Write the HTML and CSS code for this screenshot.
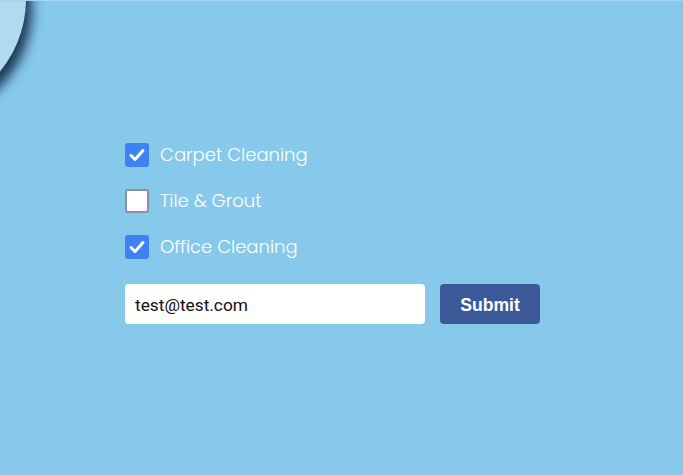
FILE: index.html
```html
<!DOCTYPE html>
<html>
<head>
<meta charset="utf-8">
<link rel="stylesheet" href="styles.css">
</head>
<body>
<div class="page">
  <div class="blob"></div>
  <form class="form">
    <label class="option">
      <span class="box checked"><svg viewBox="0 0 24 24" width="24" height="24"><path d="M6 12.5l4 4 8-9" fill="none" stroke="#fff" stroke-width="3" stroke-linecap="round" stroke-linejoin="round"/></svg></span>
      <span class="label">Carpet Cleaning</span>
    </label>
    <label class="option">
      <span class="box"></span>
      <span class="label">Tile &amp; Grout</span>
    </label>
    <label class="option">
      <span class="box checked"><svg viewBox="0 0 24 24" width="24" height="24"><path d="M6 12.5l4 4 8-9" fill="none" stroke="#fff" stroke-width="3" stroke-linecap="round" stroke-linejoin="round"/></svg></span>
      <span class="label">Office Cleaning</span>
    </label>
    <div class="row">
      <input class="email" type="text" value="test@test.com">
      <button class="submit" type="button">Submit</button>
    </div>
  </form>
</div>
</body>
</html>
```

FILE: styles.css
```css
html, body {
  margin: 0;
  padding: 0;
}
body {
  background: #87c9ea;
  width: 683px;
  height: 475px;
  overflow: hidden;
}
.page {
  position: relative;
  width: 683px;
  height: 475px;
  border-top: 1px solid #a3d6ee;
  box-sizing: border-box;
  overflow: hidden;
}
.blob {
  position: absolute;
  left: -202px;
  top: -116px;
  width: 228px;
  height: 228px;
  border-radius: 50%;
  background: #b0dbee;
  box-shadow: 6px 9px 12px rgba(8, 30, 60, 0.85);
}
.form {
  display: flex;
  flex-direction: column;
  padding: 142px 0 0 125px;
  gap: 22px;
}
.option {
  display: flex;
  align-items: center;
  gap: 11px;
  height: 24px;
}
.box {
  width: 24px;
  height: 24px;
  box-sizing: border-box;
  border-radius: 3px;
  background: #fff;
  border: 2px solid #8c8fa3;
  display: flex;
}
.box.checked {
  background: #3d82f2;
  border: none;
}
.label {
  font-family: "Poppins", "Inter", "Lato", sans-serif;
  font-weight: 300;
  font-size: 18px;
  color: #fff;
  padding-bottom: 2px;
}
.row {
  display: flex;
  gap: 15px;
  margin-top: 3px;
}
.email {
  width: 300px;
  height: 40px;
  box-sizing: border-box;
  border: none;
  border-radius: 4px;
  background: #fff;
  padding: 1px 10px 0;
  font-family: "Roboto", "Liberation Sans", sans-serif;
  font-size: 17.3px;
  color: #111;
  outline: none;
}
.submit {
  width: 100px;
  height: 40px;
  border: none;
  border-radius: 4px;
  background: #3b5998;
  color: #fff;
  font-family: "Liberation Sans", Arial, sans-serif;
  font-weight: bold;
  font-size: 17.6px;
  padding: 2px 0 0;
}
```
